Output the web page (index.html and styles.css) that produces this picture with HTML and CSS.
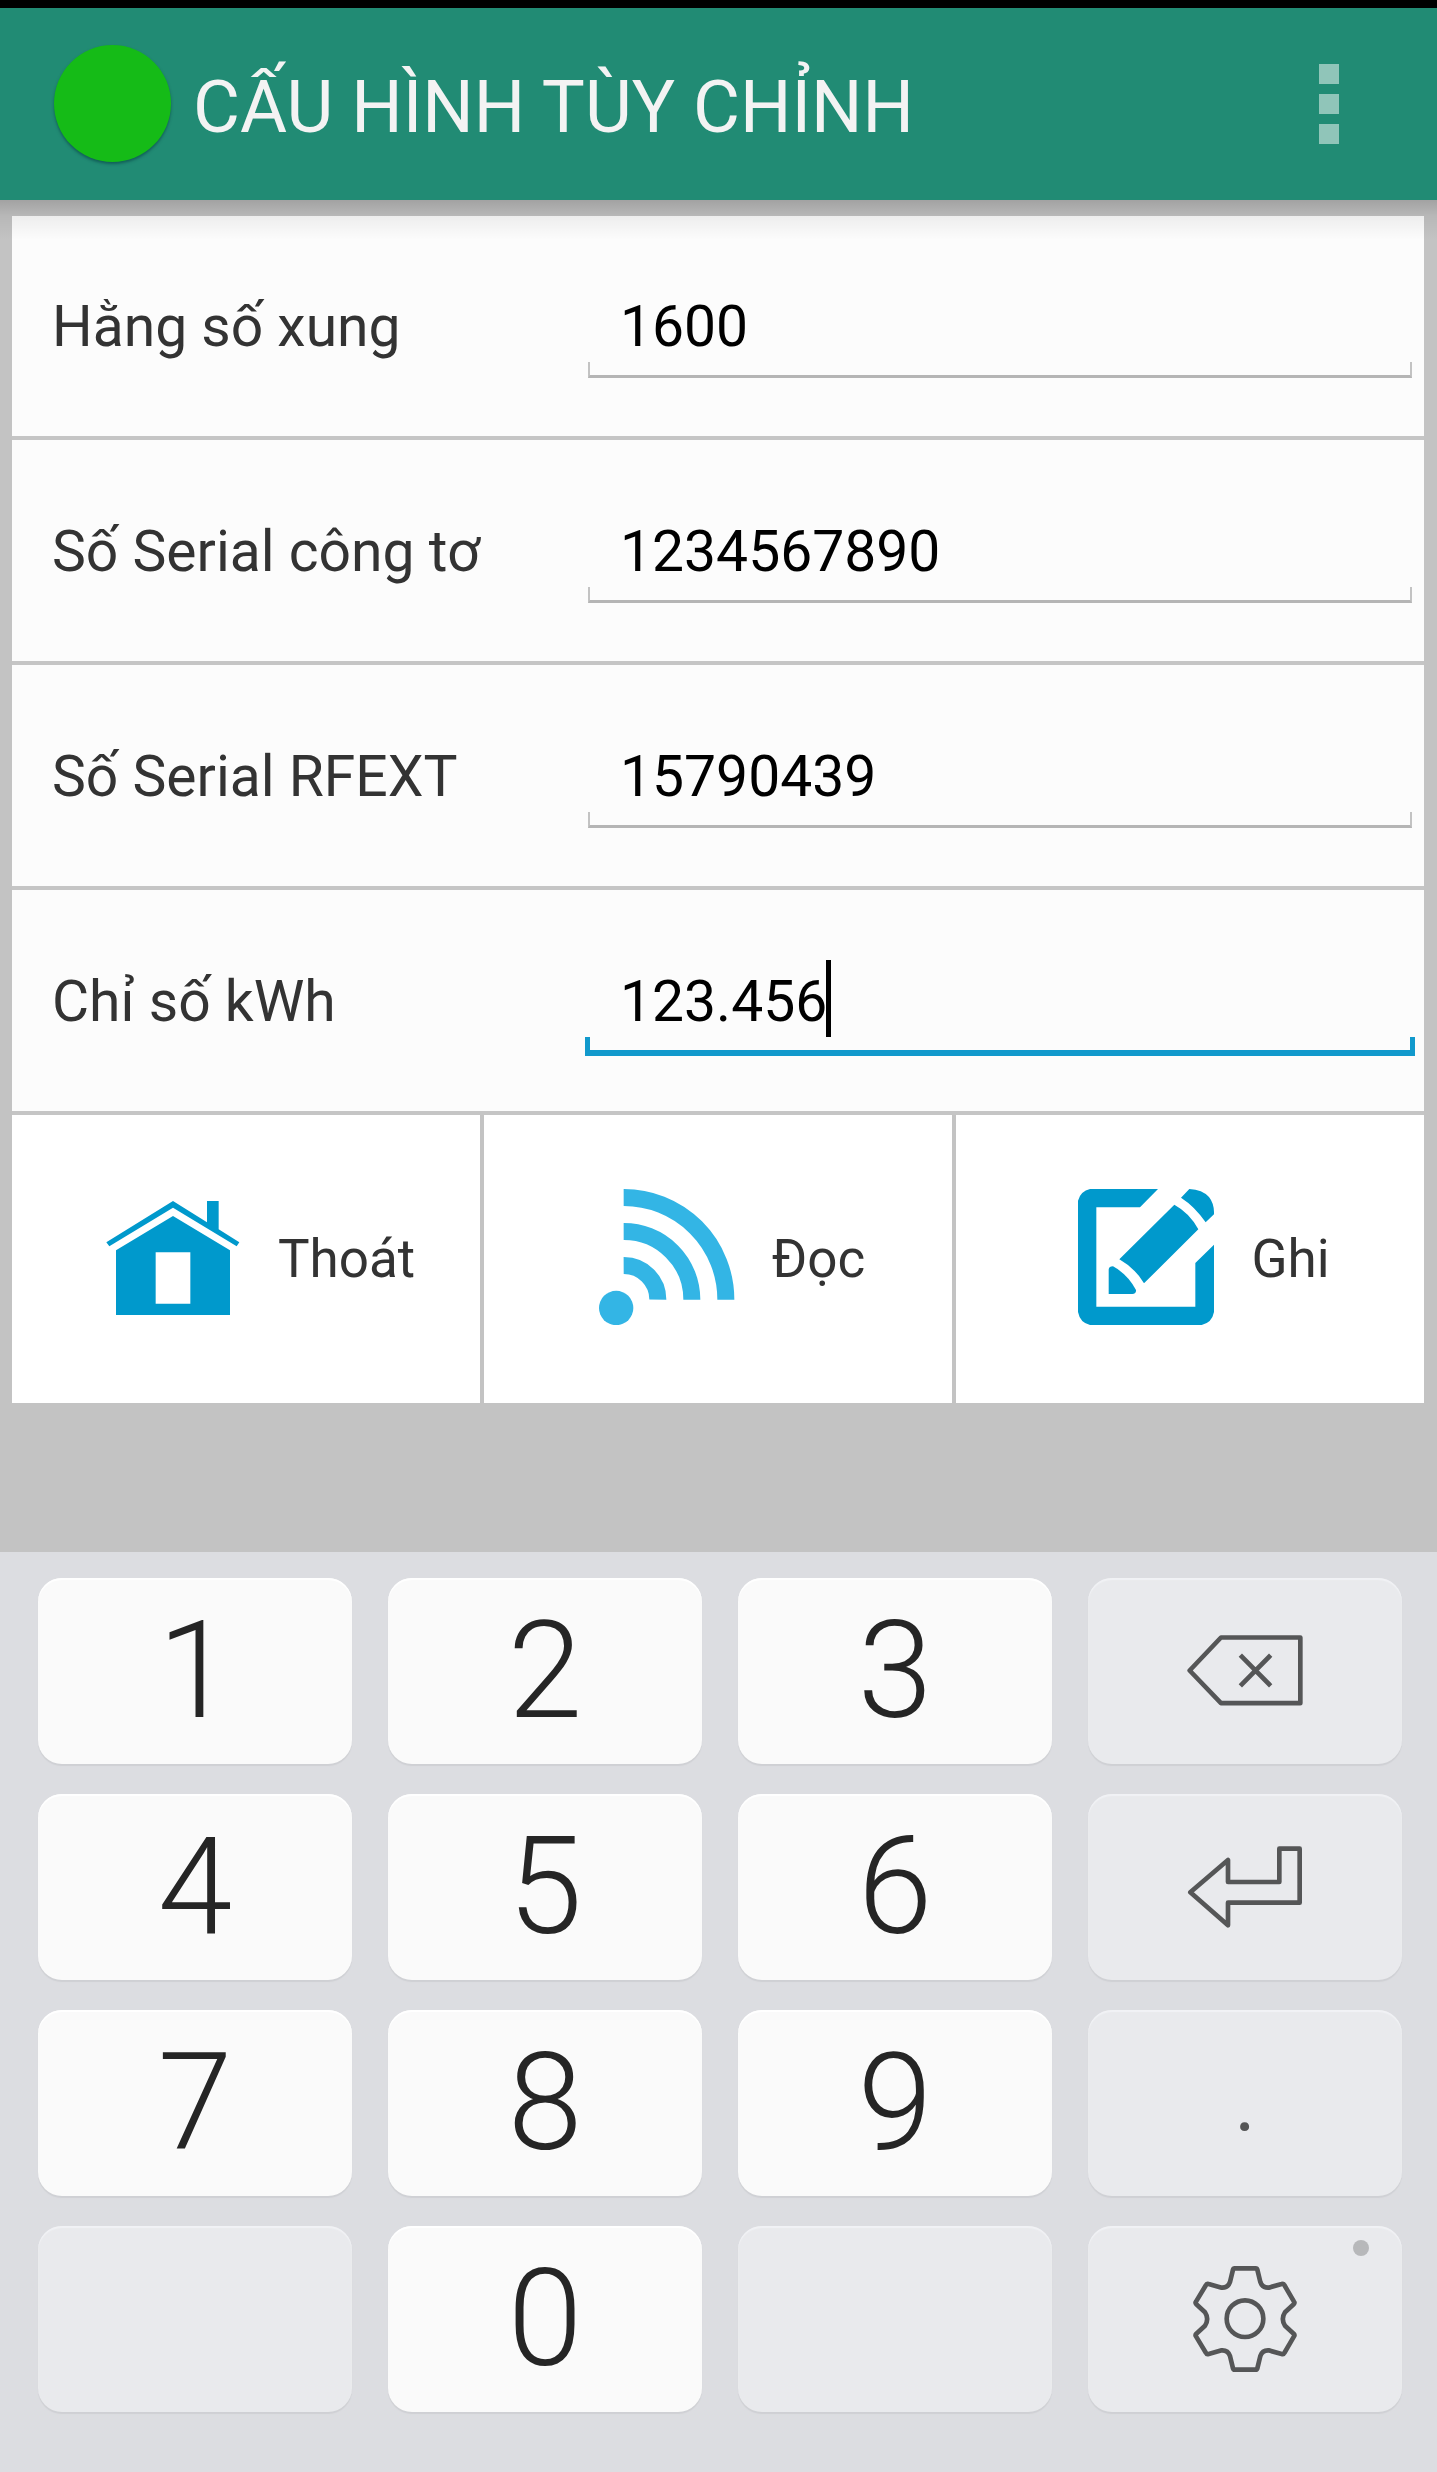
FILE: index.html
```
<!DOCTYPE html>
<html lang="vi">
<head>
  <meta charset="UTF-8">
  <meta name="viewport" content="width=device-width, initial-scale=1.0">
  <title>Cấu hình tùy chỉnh</title>
  <link rel="stylesheet" href="styles.css">
</head>
<body>
  <header class="app-bar">
    <span class="status"></span>
    <h1>CẤU HÌNH TÙY CHỈNH</h1>
    <div class="menu"><i></i><i></i><i></i></div>
  </header>

  <main class="content">
    <div class="row">
      <label>Hằng số xung</label>
      <div class="field">1600</div>
    </div>
    <div class="row">
      <label>Số Serial công tơ</label>
      <div class="field">1234567890</div>
    </div>
    <div class="row">
      <label>Số Serial RFEXT</label>
      <div class="field">15790439</div>
    </div>
    <div class="row">
      <label>Chỉ số kWh</label>
      <div class="field active">123.456<span class="caret"></span></div>
    </div>

    <div class="actions">
      <div class="action">
        <svg class="icon" viewBox="315 267 408 408" fill="#0099cc">
          <path d="M319 427L519 303L621 367V303H656V388L718 427L710 439L519 323L328 439Z"/>
          <path fill-rule="evenodd" d="M519 348L690 451V645H348V451ZM467 457V611H571V457Z"/>
        </svg>
        <span>Thoát</span>
      </div>
      <div class="action">
        <svg class="icon" viewBox="356 267 408 408" fill="none" stroke="#33b5e5" stroke-width="51">
          <circle cx="407.500" cy="624" r="51.500" fill="#33b5e5" stroke="none"/>
          <path d="M430 496.500A102 102 0 0 1 532.500 599M430 394.500A204 204 0 0 1 634.500 599M430 292.500A306 306 0 0 1 736.500 599"/>
        </svg>
        <span>Đọc</span>
      </div>
      <div class="action">
        <svg class="icon" viewBox="384 267 408 408" fill="#0099cc">
          <path d="M624 267L570 322H439V620H736V489L792 434V636Q786 668 755 675H420Q390 668 384 636V302Q392 273 420 267Z"/>
          <path d="M718 267Q757 269 777 291Q793 311 792 343L767 367Q735 320 693 293Z"/>
          <path d="M673 314Q719 339 745 388L582 550Q557 506 508 478Z"/>
          <path d="M476 509Q477 499 489 499Q533 523 558 570Q559 581 547 582H476Z"/>
        </svg>
        <span>Ghi</span>
      </div>
    </div>
  </main>

  <section class="keyboard">
    <div class="key">1</div>
    <div class="key">2</div>
    <div class="key">3</div>
    <div class="key alt">
      <svg width="120" height="77" viewBox="345 275 360 230">
        <path d="M453 291H691V488H453L359 390Z"/>
        <path stroke-linejoin="miter" d="M511 344L602 436M602 344L511 436"/>
      </svg>
    </div>
    <div class="key">4</div>
    <div class="key">5</div>
    <div class="key">6</div>
    <div class="key alt">
      <svg width="120" height="90" viewBox="345 903 360 270">
        <path d="M361 1054L474 957V1023H628V923H689V1085H474V1153Z"/>
      </svg>
    </div>
    <div class="key">7</div>
    <div class="key">8</div>
    <div class="key">9</div>
    <div class="key alt dot">.</div>
    <div class="key alt"></div>
    <div class="key">0</div>
    <div class="key alt"></div>
    <div class="key alt">
      <svg width="110" height="110" viewBox="360 189 330 330">
        <path d="M494 202H557Q561 202 562 206L571 243Q577 261 596 260L635 249Q641 247 643 252L672 302Q675 306 671 310L645 334Q632 354 645 374L671 398Q675 402 672 406L643 456Q641 461 635 459L596 448Q577 447 571 465L562 502Q561 506 557 506H494Q490 506 489 502L480 465Q474 447 455 448L416 459Q410 461 408 456L378 406Q375 402 379 398L405 374Q418 354 405 334L379 310Q375 306 378 302L408 252Q410 247 416 249L455 260Q474 261 480 243L489 206Q490 202 494 202Z"/>
        <circle cx="525" cy="353" r="55"/>
      </svg>
      <span class="badge"></span>
    </div>
  </section>
</body>
</html>
```

FILE: styles.css
```
* {
  box-sizing: border-box;
}
body {
  margin: 0;
  width: 1437px;
  height: 2472px;
  display: flex;
  flex-direction: column;
  overflow: hidden;
  font-family: Roboto, sans-serif;
  background-color: #c3c3c3;
}
.app-bar {
  position: relative;
  display: flex;
  align-items: center;
  height: 200px;
  padding: 0 98px 0 54px;
  border-top: 8px solid #000;
  background-color: #218b74;
}
/* shadow cast over the top of the form */
.app-bar::after {
  content: "";
  position: absolute;
  left: 0;
  right: 0;
  top: 100%;
  height: 40px;
  background: linear-gradient(rgba(0, 0, 0, 0.17), rgba(0, 0, 0, 0.06) 40%, rgba(0, 0, 0, 0));
}
.status {
  width: 117px;
  height: 117px;
  margin-bottom: 1px;
  border-radius: 50%;
  background-color: #15bb17;
  box-shadow: 0 2px 3px rgba(0, 50, 60, 0.5);
}
h1 {
  flex: 1;
  margin: 0;
  padding: 6px 0 0 22px;
  font-size: 72.2px;
  font-weight: 400;
  color: #f3f3f3;
}
.menu {
  display: flex;
  flex-direction: column;
  gap: 10px;
}
.menu i {
  width: 20px;
  height: 20px;
  background-color: #90c5b9;
}
.content {
  flex: 1;
  padding: 16px 13px 0 12px;
}
.row {
  display: flex;
  align-items: stretch;
  height: 225px;
  padding-top: 2px;
  border-bottom: 4px solid #c5c5c5;
  background-color: #fcfcfc;
}
.row:first-child {
  height: 224px;
  padding-top: 1px;
}
.row label {
  display: flex;
  align-items: center;
  width: 576px;
  padding-left: 40px;
  font-size: 57px;
  color: #333;
}
.field {
  position: relative;
  flex: 1;
  display: flex;
  align-items: center;
  margin-right: 12px;
  padding-left: 32px;
  font-size: 57px;
  color: #000;
}
.field::after {
  content: "";
  position: absolute;
  left: 0;
  right: 0;
  bottom: 58px;
  height: 13px;
  border: 2px solid #c3c3c3;
  border-bottom: 3px solid #b5b5b5;
  border-top: none;
}
.field.active::after {
  left: -3px;
  right: -3px;
  bottom: 55px;
  border: 5px solid #1199cc;
  border-bottom-width: 6px;
  border-top: none;
}
.caret {
  width: 5px;
  height: 77px;
  margin: -7px 0 0 -1px;
  background-color: #000;
}
.actions {
  display: grid;
  grid-template-columns: repeat(3, 1fr);
  gap: 4px;
  height: 288px;
  background-color: #c3c3c3;
}
.action {
  display: flex;
  align-items: center;
  justify-content: center;
  gap: 37px;
  padding-left: 28px;
  background-color: #fff;
  font-size: 53px;
  color: #333;
}
.icon {
  width: 136px;
  height: 136px;
  margin-bottom: 4px;
}
.keyboard {
  display: grid;
  grid-template-columns: repeat(4, 314px);
  grid-auto-rows: 186px;
  gap: 30px 36px;
  height: 920px;
  padding: 26px 0 0 38px;
  background-color: #dcdde1;
}
.key {
  position: relative;
  display: flex;
  align-items: center;
  justify-content: center;
  padding-bottom: 1px;
  border-radius: 24px;
  background-color: #fafafa;
  box-shadow: inset 0 2px 1px #fff, 0 2px 1px #cfd0d4;
  font-size: 134.5px;
  font-weight: 300;
  color: #252525;
}
.key.alt {
  background-color: #e9eaed;
  box-shadow: inset 0 2px 1px #f1f2f5, 0 2px 1px #cfd0d4;
}
.key svg {
  fill: none;
  stroke: #555657;
  stroke-width: 14;
  stroke-linejoin: round;
}
.key.dot {
  padding: 1px 0 0;
  font-size: 80px;
  font-weight: 400;
  color: #555657;
}
.badge {
  position: absolute;
  top: 14px;
  right: 33px;
  width: 16px;
  height: 16px;
  border-radius: 50%;
  background-color: #b7b8ba;
}
```
